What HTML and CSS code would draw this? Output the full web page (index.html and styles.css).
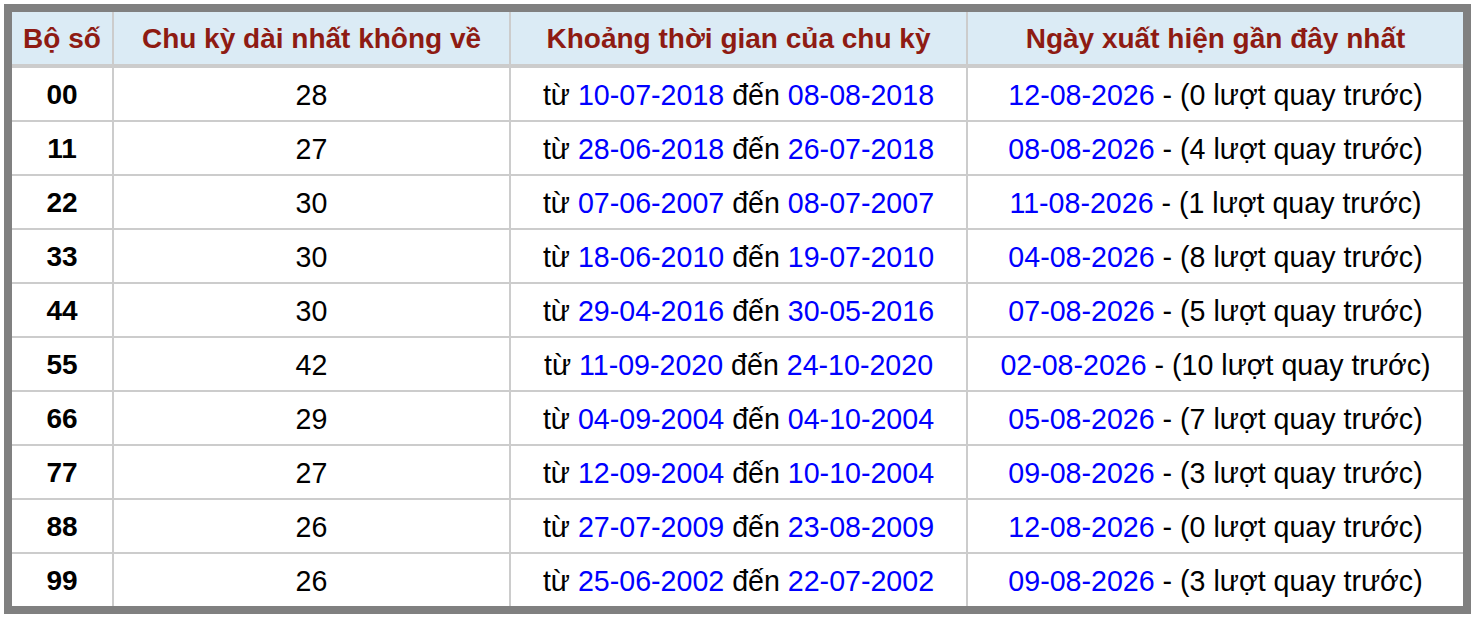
FILE: index.html
```html
<!DOCTYPE html>
<html lang="vi">
<head>
<meta charset="utf-8">
<title>Chu kỳ dài nhất không về</title>
<link rel="stylesheet" href="styles.css">
</head>
<body>
<div class="frame">
<table class="stats">
<colgroup>
<col class="c1"><col class="c2"><col class="c3"><col class="c4">
</colgroup>
<thead>
<tr><th>Bộ số</th><th>Chu kỳ dài nhất không về</th><th>Khoảng thời gian của chu kỳ</th><th>Ngày xuất hiện gần đây nhất</th></tr>
</thead>
<tbody>
<tr><td class="num">00</td><td>28</td><td>từ <span class="d">10-07-2018</span> đến <span class="d">08-08-2018</span></td><td><span class="d">12-08-2026</span> - (0 lượt quay trước)</td></tr>
<tr><td class="num">11</td><td>27</td><td>từ <span class="d">28-06-2018</span> đến <span class="d">26-07-2018</span></td><td><span class="d">08-08-2026</span> - (4 lượt quay trước)</td></tr>
<tr><td class="num">22</td><td>30</td><td>từ <span class="d">07-06-2007</span> đến <span class="d">08-07-2007</span></td><td><span class="d">11-08-2026</span> - (1 lượt quay trước)</td></tr>
<tr><td class="num">33</td><td>30</td><td>từ <span class="d">18-06-2010</span> đến <span class="d">19-07-2010</span></td><td><span class="d">04-08-2026</span> - (8 lượt quay trước)</td></tr>
<tr><td class="num">44</td><td>30</td><td>từ <span class="d">29-04-2016</span> đến <span class="d">30-05-2016</span></td><td><span class="d">07-08-2026</span> - (5 lượt quay trước)</td></tr>
<tr><td class="num">55</td><td>42</td><td>từ <span class="d">11-09-2020</span> đến <span class="d">24-10-2020</span></td><td><span class="d">02-08-2026</span> - (10 lượt quay trước)</td></tr>
<tr><td class="num">66</td><td>29</td><td>từ <span class="d">04-09-2004</span> đến <span class="d">04-10-2004</span></td><td><span class="d">05-08-2026</span> - (7 lượt quay trước)</td></tr>
<tr><td class="num">77</td><td>27</td><td>từ <span class="d">12-09-2004</span> đến <span class="d">10-10-2004</span></td><td><span class="d">09-08-2026</span> - (3 lượt quay trước)</td></tr>
<tr><td class="num">88</td><td>26</td><td>từ <span class="d">27-07-2009</span> đến <span class="d">23-08-2009</span></td><td><span class="d">12-08-2026</span> - (0 lượt quay trước)</td></tr>
<tr><td class="num">99</td><td>26</td><td>từ <span class="d">25-06-2002</span> đến <span class="d">22-07-2002</span></td><td><span class="d">09-08-2026</span> - (3 lượt quay trước)</td></tr>
</tbody>
</table>
</div>
</body>
</html>
```
FILE: styles.css
```css
html, body {
  background: #ffffff;
}
body {
  margin: 4px;
  font-family: "Liberation Sans", Arial, Helvetica, sans-serif;
}
.frame {
  width: 1451px;
  border: 8px solid #808080;
}
.stats {
  width: 1451px;
  border-collapse: separate;
  border-spacing: 0;
  table-layout: fixed;
  font-size: 28.6px;
  color: #000;
}
.c1 { width: 102px; }
.c2 { width: 397px; }
.c3 { width: 457px; }
.c4 { width: 495px; }
.stats th,
.stats td {
  padding: 0;
  text-align: center;
  vertical-align: middle;
  border-right: 2px solid #cccccc;
  white-space: nowrap;
}
.stats th:last-child,
.stats td:last-child {
  border-right: none;
}
.stats th {
  height: 50px;
  padding-top: 2px;
  font-size: 28px;
  background: #dbebf5;
  color: #8e1b13;
  font-weight: bold;
  border-bottom: 4px solid #cccccc;
}
.stats td {
  height: 50px;
  padding-top: 2px;
  border-bottom: 2px solid #cccccc;
}
.stats tbody tr:last-child td {
  border-bottom: none;
}
.stats td.num {
  font-weight: bold;
  font-size: 28px;
}
.d {
  color: #0000ff;
}
```
